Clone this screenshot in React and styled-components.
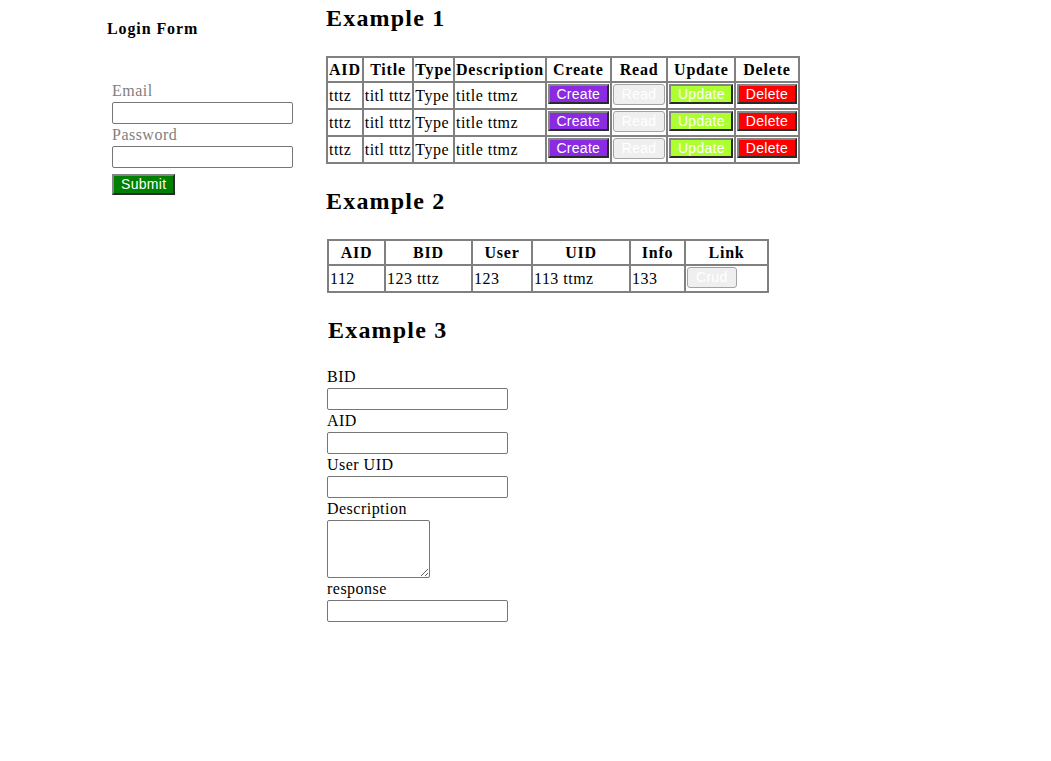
import React from "react";
import styled, { createGlobalStyle, css } from "styled-components";

const GlobalStyle = createGlobalStyle`
  html, body {
    margin: 0;
    padding: 0;
    background: #ffffff;
  }
  body {
    font-family: "Liberation Serif", "Times New Roman", serif;
    font-size: 16px;
    color: #000000;
    letter-spacing: 0.48px;
  }
`;

const Page = styled.div`
  display: flex;
  align-items: flex-start;
`;

const Sidebar = styled.aside`
  flex: none;
  width: 219px;
  padding: 20px 0 0 107px;
`;

const SideTitle = styled.h4`
  margin: 0;
  font-size: 16px;
  font-weight: bold;
  line-height: 18px;
  letter-spacing: 0.9px;
`;

const Main = styled.main`
  flex: 1;
  padding-top: 5px;
`;

const Heading = styled.h2`
  margin: ${(p) => p.$top || 0}px 0 0 ${(p) => p.$left || 0}px;
  font-size: 24px;
  font-weight: bold;
  line-height: 27px;
  letter-spacing: 1.2px;
`;

const Form = styled.form`
  display: flex;
  flex-direction: column;
  align-items: flex-start;
  margin: ${(p) => p.$top}px 0 0 ${(p) => p.$left}px;
`;

const Label = styled.label`
  display: block;
  line-height: 21px;
  color: ${(p) => (p.$muted ? "#808080" : "#000000")};
`;

const fieldBase = css`
  display: block;
  box-sizing: border-box;
  margin: 1px 0 0;
  border: 1px solid #767676;
  border-radius: 2px;
  padding: 1px 2px;
  font-family: "Liberation Sans", Arial, sans-serif;
  font-size: 13.33px;
  background: #ffffff;
`;

const Input = styled.input`
  ${fieldBase};
  width: 181px;
  height: 22px;
`;

const TextArea = styled.textarea`
  ${fieldBase};
  width: 103px;
  height: 58px;
`;

const palette = {
  create: "#8a2be2",
  update: "#adff2f",
  delete: "#ff0000",
  submit: "#008000",
};

const Button = styled.button`
  box-sizing: border-box;
  height: ${(p) => (p.$tone === "submit" ? 21 : 20)}px;
  padding: 0 ${(p) => (p.$tone === "submit" ? 7 : 6.5)}px;
  margin: ${(p) => (p.$tone === "submit" ? "6px 0 0" : "0")};
  font-family: "Liberation Sans", Arial, sans-serif;
  font-size: 14px;
  letter-spacing: 0.3px;
  line-height: 15px;
  color: #ffffff;
  vertical-align: top;
  cursor: pointer;
  ${(p) =>
    p.$tone && palette[p.$tone]
      ? css`
          background: ${palette[p.$tone]};
          border-width: 2px;
          border-style: solid;
          border-color: #858585 #2a2a2a #2a2a2a #858585;
          border-radius: 0;
        `
      : css`
          background: #efefef;
          border: 1px solid #a3a3a3;
          border-radius: 3px;
          height: 21px;
          padding: 0 8px;
        `}
`;

const Table = styled.table`
  border-collapse: collapse;
  border: 2px solid #808080;
  margin: ${(p) => p.$top}px 0 0 ${(p) => p.$left || 0}px;
  ${(p) =>
    p.$fixed &&
    css`
      table-layout: fixed;
      width: ${p.$fixed}px;
    `}
`;

const Th = styled.th`
  border: 2px solid #808080;
  padding: 0 1px;
  line-height: 23px;
  font-weight: bold;
  text-align: center;
  white-space: nowrap;
  letter-spacing: 0.8px;
`;

const Td = styled.td`
  border: 2px solid #808080;
  padding: 1px;
  height: 23px;
  line-height: 23px;
  text-align: left;
  white-space: nowrap;
`;

const rows1 = [1, 2, 3];
const cols2 = [
  ["AID", 57],
  ["BID", 87],
  ["User", 60],
  ["UID", 98],
  ["Info", 55],
  ["Link", 83],
];

export default function App() {
  return (
    <>
      <GlobalStyle />
      <Page>
        <Sidebar>
          <SideTitle>Login Form</SideTitle>
          <Form $top={42} $left={5} onSubmit={(e) => e.preventDefault()}>
            <Label $muted>Email</Label>
            <Input type="email" />
            <Label $muted>Password</Label>
            <Input type="password" />
            <Button $tone="submit" type="submit">Submit</Button>
          </Form>
        </Sidebar>
        <Main>
          <Heading>Example 1</Heading>
          <Table $top={24}>
            <thead>
              <tr>
                {["AID", "Title", "Type", "Description", "Create", "Read", "Update", "Delete"].map((h) => (
                  <Th key={h}>{h}</Th>
                ))}
              </tr>
            </thead>
            <tbody>
              {rows1.map((r) => (
                <tr key={r}>
                  <Td>tttz</Td>
                  <Td>titl tttz</Td>
                  <Td>Type</Td>
                  <Td>title ttmz</Td>
                  <Td><Button $tone="create">Create</Button></Td>
                  <Td><Button>Read</Button></Td>
                  <Td><Button $tone="update">Update</Button></Td>
                  <Td><Button $tone="delete">Delete</Button></Td>
                </tr>
              ))}
            </tbody>
          </Table>

          <Heading $top={24}>Example 2</Heading>
          <Table $top={24} $left={1} $fixed={440}>
            <colgroup>
              {cols2.map(([n, w]) => (
                <col key={n} style={{ width: w }} />
              ))}
            </colgroup>
            <thead>
              <tr>
                {cols2.map(([n]) => (
                  <Th key={n}>{n}</Th>
                ))}
              </tr>
            </thead>
            <tbody>
              <tr>
                <Td>112</Td>
                <Td>123 tttz</Td>
                <Td>123</Td>
                <Td>113 ttmz</Td>
                <Td>133</Td>
                <Td><Button>Crud</Button></Td>
              </tr>
            </tbody>
          </Table>

          <Heading $top={24} $left={2}>Example 3</Heading>
          <Form $top={22} $left={1} onSubmit={(e) => e.preventDefault()}>
            <Label>BID</Label>
            <Input type="text" />
            <Label>AID</Label>
            <Input type="text" />
            <Label>User UID</Label>
            <Input type="text" />
            <Label>Description</Label>
            <TextArea />
            <Label>response</Label>
            <Input type="text" />
          </Form>
        </Main>
      </Page>
    </>
  );
}
